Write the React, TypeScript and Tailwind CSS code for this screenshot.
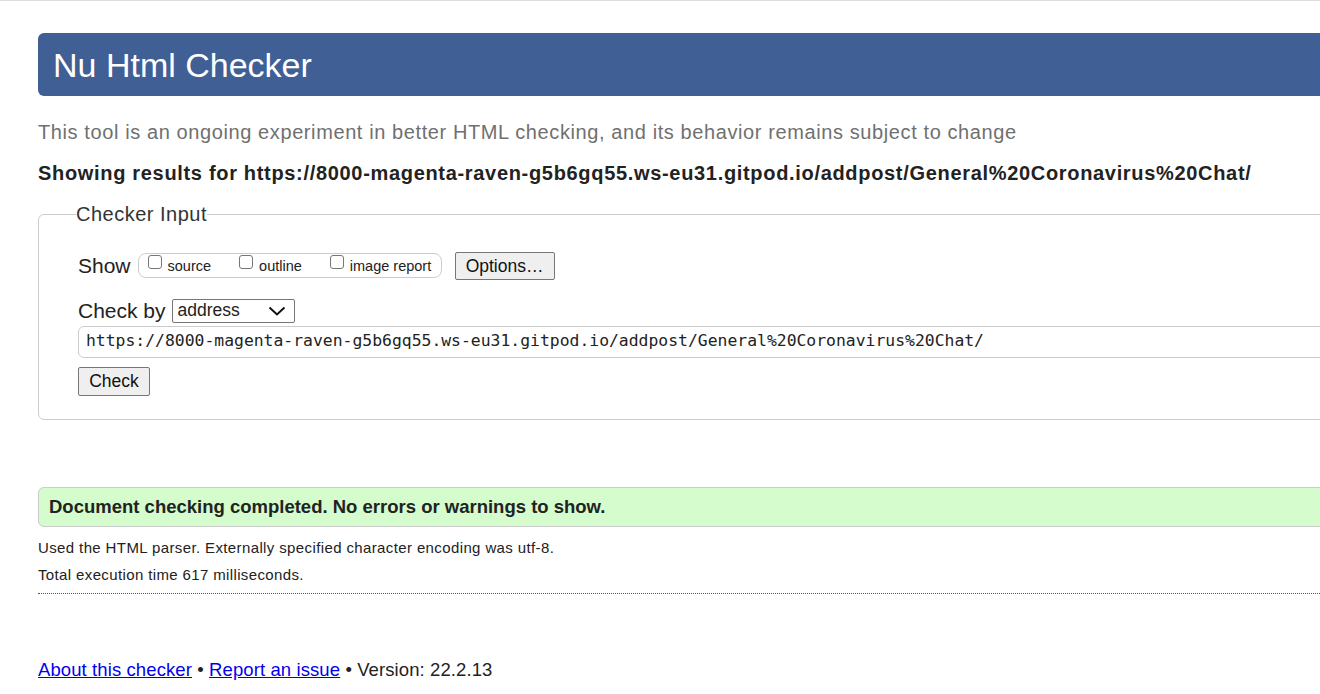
import React from "react";

const TARGET_URL =
    "https://8000-magenta-raven-g5b6gq55.ws-eu31.gitpod.io/addpost/General%20Coronavirus%20Chat/";

const Checkbox = ({ label }: { label: string }) => (
    <label className="flex items-center gap-[6px] text-[14.5px] text-[#222]">
        <span className="w-[14px] h-[14px] rounded-[3px] border border-[#767676] bg-white -mt-[7px]" />
        <span className="mt-[2px]">{label}</span>
    </label>
);

export default function App() {
    return (
        <div className="w-[1320px] h-[694px] overflow-hidden bg-white border-t border-[#dedede] font-['Liberation_Sans',Arial,sans-serif] text-[#222]">
            <div className="w-[1420px] pl-[38px] pt-[32px]">
                <header className="h-[63px] bg-[#3f5f95] rounded-l-[6px] flex items-center pl-[15px]">
                    <h1 className="text-[34px] text-white leading-none">Nu Html Checker</h1>
                </header>

                <p className="mt-[24px] text-[20px] tracking-[0.6px] text-[#707070] leading-[24px]">
                    This tool is an ongoing experiment in better HTML checking, and its behavior remains subject to change
                </p>
                <p className="mt-[17px] text-[20px] tracking-[0.68px] font-bold leading-[24px]">
                    Showing results for {TARGET_URL}
                </p>

                <fieldset className="mt-[18px] border border-[#ccc] rounded-[6px] pl-[39px] pb-[23px]">
                    <legend className="-ml-[2px] px-0 text-[20px] tracking-[0.5px] text-[#333] leading-[22px]">
                        Checker Input
                    </legend>

                    <div className="mt-[25px] flex items-center">
                        <span className="text-[21px] mr-[7px]">Show</span>
                        <div className="h-[25px] w-[304px] border border-[#ccc] rounded-[8px] flex items-center pl-[9px] gap-[28px]">
                            <Checkbox label="source" />
                            <Checkbox label="outline" />
                            <Checkbox label="image report" />
                        </div>
                        <button
                            type="button"
                            className="ml-[13px] h-[28px] w-[100px] bg-[#efefef] border border-[#767676] rounded-[2px] text-[17.5px] text-[#111]"
                        >
                            Options…
                        </button>
                    </div>

                    <div className="mt-[17px] h-[24px] flex items-center">
                        <span className="text-[21px] mr-[6px]">Check by</span>
                        <div className="h-[24px] w-[123px] border border-[#767676] rounded-[2px] flex items-center justify-between pl-[5px] pr-[8px] text-[17.5px]">
                            <span>address</span>
                            <svg width="18" height="10" viewBox="0 0 18 10" fill="none">
                                <path d="M1.5 1.5 L9 8.5 L16.5 1.5" stroke="#111" strokeWidth="2" />
                            </svg>
                        </div>
                    </div>

                    <div className="mt-[3px] h-[32px] border border-[#ccc] rounded-[6px] flex items-center pl-[7px] font-['DejaVu_Sans_Mono','Liberation_Mono',monospace] text-[16.4px]">
                        {TARGET_URL}
                    </div>

                    <button
                        type="button"
                        className="mt-[9px] h-[29px] w-[72px] bg-[#efefef] border border-[#767676] rounded-[2px] text-[17.5px] text-[#111]"
                    >
                        Check
                    </button>
                </fieldset>

                <div className="mt-[67px] h-[40px] bg-[#d4fccc] border border-[#ccc] rounded-l-[6px] flex items-center pl-[10px]">
                    <strong className="text-[18.5px]">Document checking completed. No errors or warnings to show.</strong>
                </div>

                <p className="mt-[11px] text-[15px] tracking-[0.38px] leading-[20px]">
                    Used the HTML parser. Externally specified character encoding was utf-8.
                </p>
                <p className="mt-[7px] text-[15px] tracking-[0.37px] leading-[20px]">
                    Total execution time 617 milliseconds.
                </p>

                <div className="mt-[8px] border-t border-dotted border-[#555]" />

                <p className="mt-[64px] text-[18.5px] tracking-[0.1px] leading-[24px]">
                    <a href="#" className="text-[#0000ee] underline">About this checker</a>
                    {" • "}
                    <a href="#" className="text-[#0000ee] underline">Report an issue</a>
                    {" • Version: 22.2.13"}
                </p>
            </div>
        </div>
    );
}
